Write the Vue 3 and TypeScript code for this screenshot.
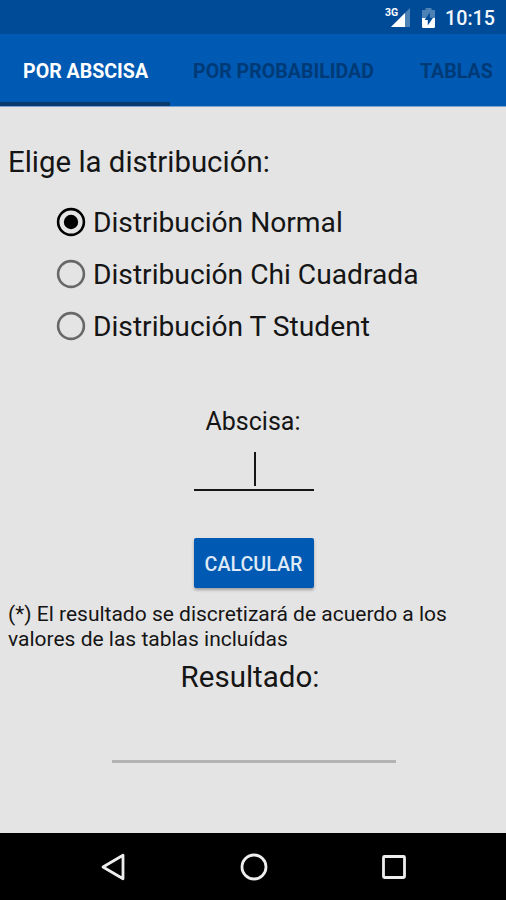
<script setup lang="ts">
import { ref } from 'vue'

interface Tab { id: string; label: string }
interface Option { id: string; label: string }

const tabs: Tab[] = [
  { id: 'abscisa', label: 'POR ABSCISA' },
  { id: 'probabilidad', label: 'POR PROBABILIDAD' },
  { id: 'tablas', label: 'TABLAS' },
]
const options: Option[] = [
  { id: 'normal', label: 'Distribución Normal' },
  { id: 'chi', label: 'Distribución Chi Cuadrada' },
  { id: 'student', label: 'Distribución T Student' },
]
const activeTab = ref('abscisa')
const selected = ref('normal')
</script>

<template>
  <div class="screen">
    <header class="status">
      <svg class="signal" width="27" height="22" viewBox="0 0 27 22">
        <path d="M25 1V20H6Z" fill="#4d82b7" />
        <path d="M20 6V20H6Z" fill="#fff" />
        <rect x="0" y="0" width="13" height="9.500" fill="#004b98" />
        <text x="0" y="9" class="network">3G</text>
      </svg>
      <svg class="battery" width="15" height="20" viewBox="0 0 15 20">
        <path d="M4.500 0h6v2H14v8H1V2h3.500z" fill="#4d82b7" />
        <path d="M1 10h13v8.500q0 1.500-1.500 1.500h-10Q1 20 1 18.500z" fill="#fff" />
        <path d="M8.800 4.500 3.600 12h3.200v5.500L12 9.800H8.800z" fill="#004b98" />
      </svg>
      <span class="clock">10:15</span>
    </header>

    <nav class="tabs">
      <button
        v-for="tab in tabs"
        :key="tab.id"
        class="tab"
        :class="[tab.id, { active: tab.id === activeTab }]"
        @click="activeTab = tab.id"
      ><span>{{ tab.label }}</span></button>
    </nav>

    <main class="content">
      <h1 class="heading"><span>Elige la distribución:</span></h1>
      <div class="options" role="radiogroup">
        <div
          v-for="option in options"
          :key="option.id"
          class="option"
          role="radio"
          :aria-checked="option.id === selected"
          @click="selected = option.id"
        >
          <svg class="radio" :class="{ checked: option.id === selected }" width="30" height="30" viewBox="0 0 30 30">
            <circle class="ring" cx="15" cy="15" r="12.900" />
            <circle v-if="option.id === selected" cx="15" cy="15" r="7.200" />
          </svg>
          <span>{{ option.label }}</span>
        </div>
      </div>

      <div class="label"><span>Abscisa:</span></div>
      <div class="field"><i class="caret"></i></div>
      <button class="calculate"><span>CALCULAR</span></button>
      <p class="note">(*) El resultado se discretizará de acuerdo a los<br />valores de las tablas incluídas</p>
      <h2 class="result"><span>Resultado:</span></h2>
      <div class="output"></div>
    </main>

    <footer class="navigation">
      <svg width="28" height="30" viewBox="0 0 28 30"><path d="M24 3.200V26.800L4 15z" /></svg>
      <svg width="30" height="30" viewBox="0 0 30 30"><circle cx="15" cy="15" r="12" /></svg>
      <svg width="28" height="28" viewBox="0 0 28 28"><rect x="3.500" y="3.500" width="21" height="21" rx="1" /></svg>
    </footer>
  </div>
</template>

<style>
body { margin: 0; }
</style>

<style scoped>
.screen {
  display: flex;
  flex-direction: column;
  width: 506px;
  height: 900px;
  overflow: hidden;
  background: #e4e4e4;
  color: #151515;
  font-family: Roboto, "Liberation Sans", sans-serif;
}
button { border: 0; padding: 0; font-family: inherit; }
.status {
  display: flex;
  align-items: flex-start;
  justify-content: flex-end;
  box-sizing: border-box;
  height: 34px;
  padding: 7px 11px 0 0;
  background: #004b98;
  color: #f3f7fb;
}
.signal { margin-right: 9px; }
.battery { margin: 1px 9px 0 0; }
.network { font-size: 10.500px; font-weight: 700; fill: #fff; }
.clock { font-size: 19.700px; font-weight: 500; line-height: 23px; }
.tabs {
  display: flex;
  flex: none;
  height: 71.500px;
  background: #0059b3;
  border-bottom: .5px solid #7ba3d1;
}
.tab {
  box-sizing: border-box;
  flex: none;
  height: 71.500px;
  padding: 7px 0 0 23px;
  border-bottom: 4px solid transparent;
  background: transparent;
  color: #003a76;
  font-size: 19.600px;
  font-weight: 700;
  text-align: left;
  white-space: nowrap;
}
.tab.active { color: #fff; border-bottom-color: #0b3b6e; }
.tab.abscisa { width: 170px; }
.tab.probabilidad { width: 227px; }
.tab.tablas { width: 118px; }
.content {
  display: flex;
  flex: 1;
  flex-direction: column;
  align-items: center;
  min-height: 0;
}
.heading {
  align-self: flex-start;
  margin: 35px 0 0 8px;
  font-size: 29.400px;
  font-weight: 400;
  line-height: 40px;
}
.options { align-self: flex-start; margin: 15px 0 0 55.500px; }
.option { display: flex; align-items: center; gap: 7.500px; height: 52px; font-size: 28.200px; line-height: 52px; }
.radio { flex: none; margin-top: -2px; fill: #000; }
.ring { fill: none; stroke: #686868; stroke-width: 2.600; }
.checked .ring { stroke: #000; }
.label { margin-top: 54px; font-size: 25px; line-height: 30px; }
.field {
  display: flex;
  justify-content: center;
  box-sizing: border-box;
  width: 120px;
  height: 54px;
  margin-left: 1px;
  padding-top: 15px;
  border-bottom: 2px solid #151515;
}
.caret { width: 2px; height: 34px; margin-left: 2px; background: #151515; }
.calculate {
  width: 120px;
  height: 50px;
  margin: 47px 0 0 1px;
  padding-top: 3px;
  border-radius: 2px;
  background: #0059b3;
  box-shadow: 0 2px 3px rgba(0, 0, 0, .3);
  color: #dfe9f5;
  font-size: 19.700px;
  font-weight: 500;
}
.note {
  align-self: flex-start;
  margin: 14px 0 0 8px;
  font-size: 21px;
  line-height: 25px;
  white-space: nowrap;
}
.result { margin: 5px 0 0; padding-right: 6px; font-size: 29.500px; font-weight: 400; line-height: 40px; }
.output { width: 284px; height: 63px; margin-left: 1px; border-bottom: 3px solid #b3b3b3; }
.navigation {
  display: flex;
  flex: none;
  align-items: center;
  justify-content: space-between;
  box-sizing: border-box;
  height: 67px;
  padding: 0 98px 0 99px;
  background: #000;
}
.navigation svg { fill: none; stroke: #eee; stroke-width: 2.800; stroke-linejoin: round; }
</style>
